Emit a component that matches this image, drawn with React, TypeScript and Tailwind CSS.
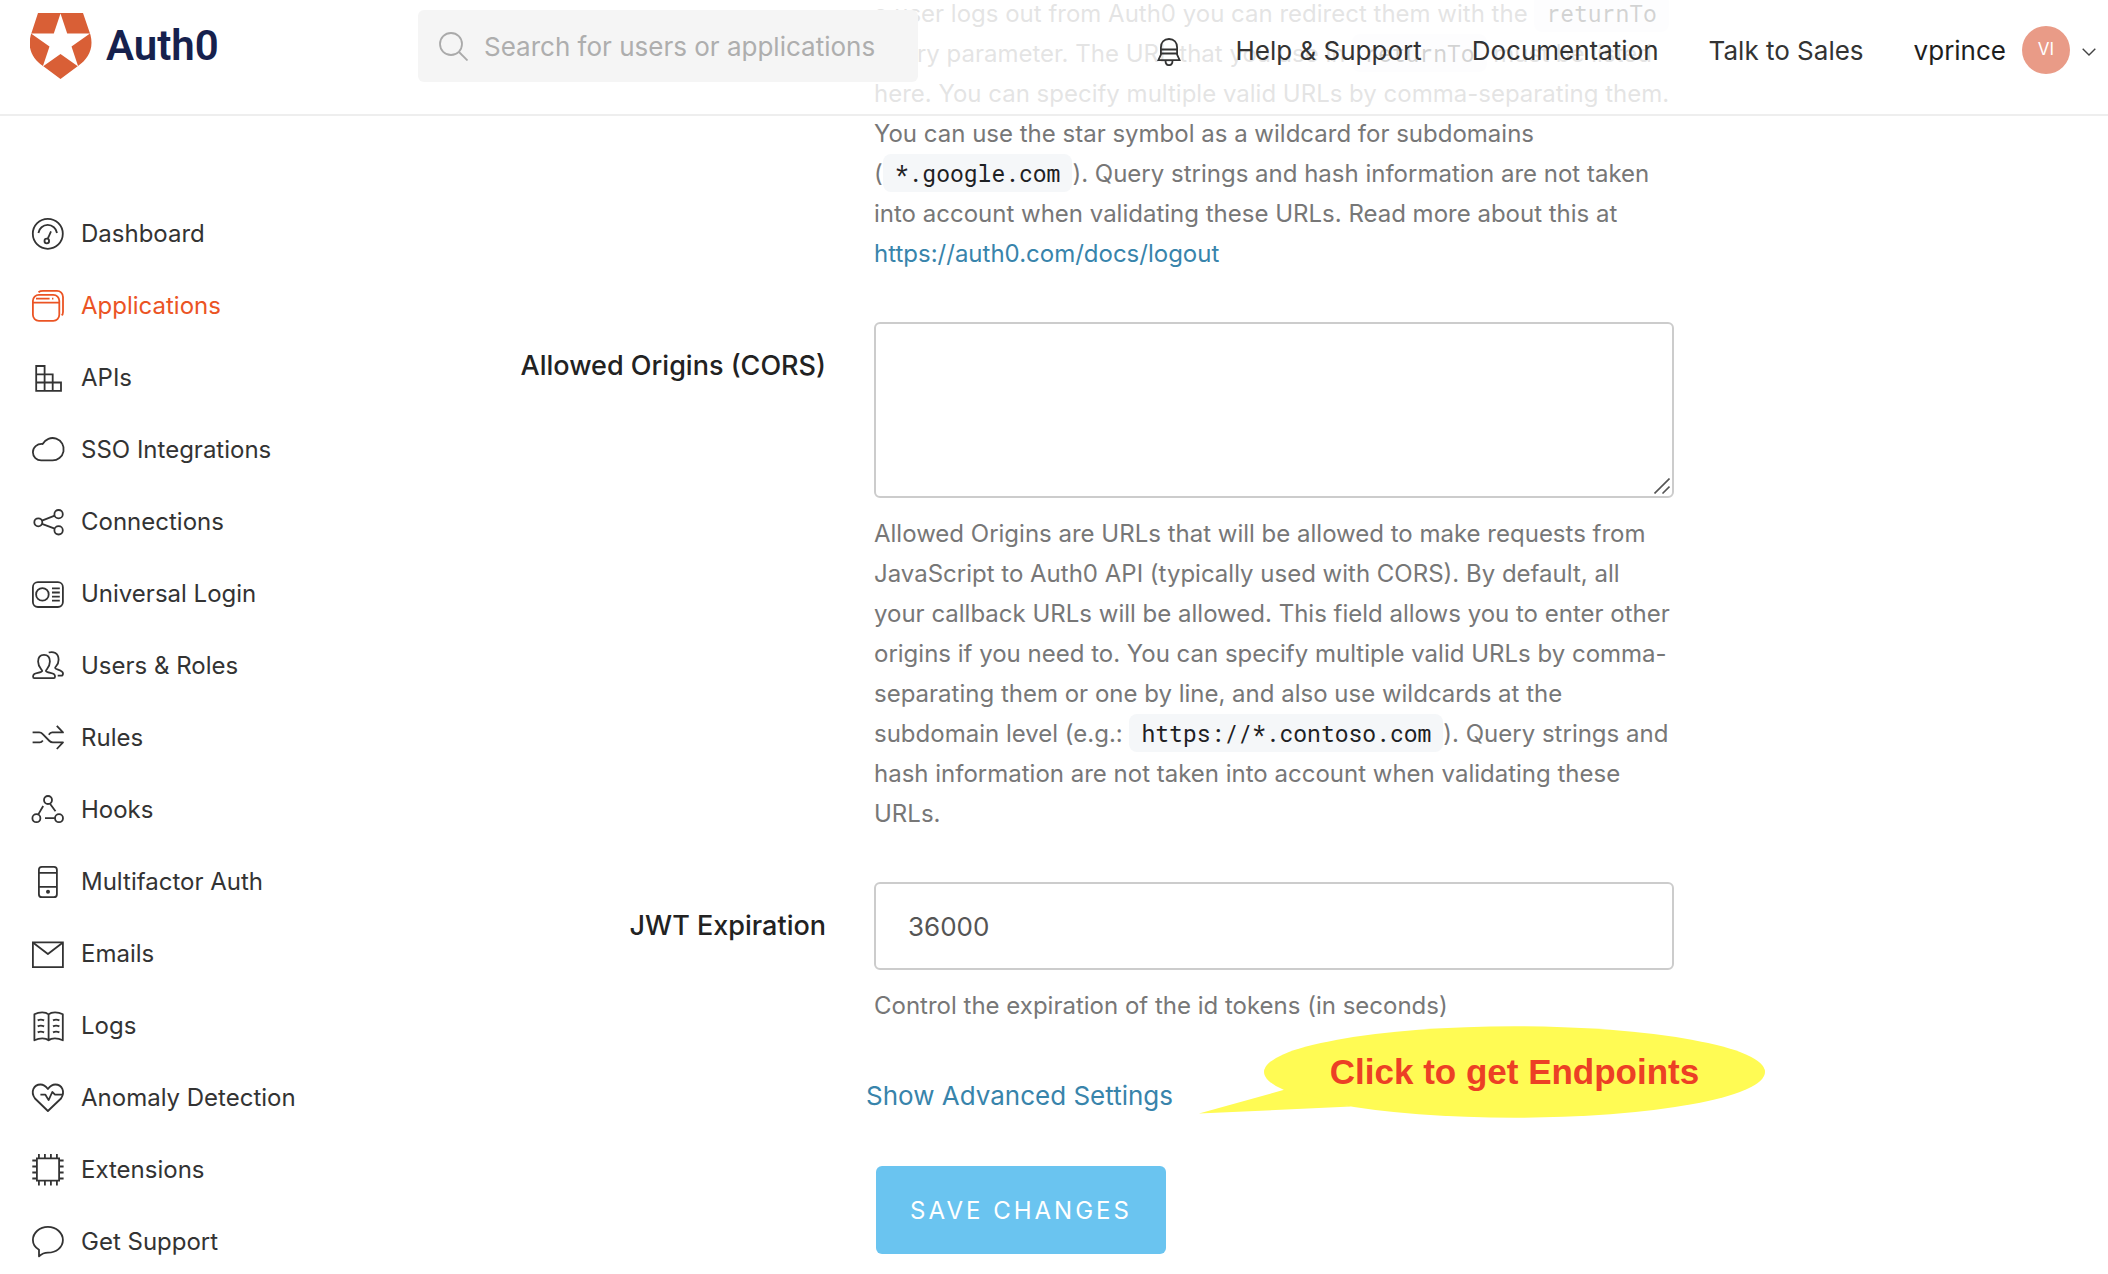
import React from 'react';

const icons: Record<string, React.ReactNode> = {
  Dashboard: (
    <>
      <circle cx="15.8" cy="15.8" r="15" />
      <path d="M6.4 15a9.4 9.4 0 0 1 18.6 0" />
      <circle cx="14.8" cy="23" r="2.3" />
      <path d="M15.8 20.6 19 13.4" />
    </>
  ),
  Applications: (
    <>
      <rect x="0.9" y="4.8" width="26.4" height="26" rx="6" />
      <path d="M1 12.7h26.3M4 8.7h13.6M20 8.7h1.4" />
      <path d="M6.5 2.2C8 1 9.5.9 11 .9h14a6 6 0 0 1 6 6v15c0 1.6-.4 2.8-1.4 3.4" />
    </>
  ),
  APIs: (
    <path strokeLinejoin="miter" d="M4.2 4h8.4v24.8H4.2zM4.2 12.3h16.5v16.5M4.2 20.5h24.8v8.3H4.2" />
  ),
  'SSO Integrations': (
    <path d="M9.2 26.4H20A11.2 11.2 0 1 0 10.6 10C5 9.6.9 13.4.9 18.2c0 4.7 3.8 8.2 8.3 8.2Z" />
  ),
  Connections: (
    <>
      <circle cx="6.3" cy="16.3" r="4" />
      <circle cx="26.6" cy="8.2" r="4.2" />
      <circle cx="26.6" cy="24.3" r="4.2" />
      <path d="M10 14.7 22.7 9.7M10 17.9l12.7 4.8" />
    </>
  ),
  'Universal Login': (
    <>
      <rect x="0.9" y="4.2" width="30" height="24.8" rx="5" />
      <circle cx="10.4" cy="16.4" r="6.3" />
      <path d="M20 10.4h7.8M20 14.5h7.8M20 18.6h7.8M20 22.7h7.8" />
    </>
  ),
  'Users & Roles': (
    <>
      <path d="M2.3 28.2c-1.6 0-1.7-3 0-4.2 1.6-1.1 7.8-1.500 7.900-3.100 0-1.400-4.100-3.400-4.100-9.400 0-4.200 2-6.700 5.900-6.700s5.900 2.500 5.900 6.700c0 6-4 8-4 9.400.1 1.600 6.200 2 7.900 3.100 1.700 1.200 1.600 4.200 0 4.200Z" />
      <path d="M16.700 2.500c4.500-1.400 9.900.5 9.900 7.200 0 5.600-3.500 6.600-3.500 8.200 0 1.800 7.900 2 7.900 5.600 0 2-.8 2.200-1.700 2.200h-3.600" />
    </>
  ),
  Rules: (
    <>
      <path d="M.6 10.4h6.600c1.500 0 2.300.3 3.300 1.400l7 7.200c1 1 1.800 1.400 3.300 1.400H31L24.800 27" />
      <path d="M.6 20.400h7.200c1.500 0 2-.4 3-1.900M16.800 12.700c1-1.600 1.700-2.300 3.400-2.300H31l-6.200-6.600" />
    </>
  ),
  Hooks: (
    <>
      <circle cx="16" cy="6" r="4" />
      <circle cx="4.4" cy="24.2" r="4" />
      <circle cx="27" cy="24.2" r="4" />
      <path d="M6.3 20.4 11.2 12M18 9.7l5.500 7.500M13 24.200h9.800" />
    </>
  ),
  'Multifactor Auth': (
    <>
      <rect x="6.9" y="0.8" width="18" height="30.4" rx="3" />
      <path d="M7 6.800h18M7 20.800h18" />
      <circle cx="16" cy="25.8" r="1.1" fill="currentColor" />
    </>
  ),
  Emails: (
    <>
      <path strokeLinejoin="miter" d="M.9 4.400h30v24.800H.9z" />
      <path d="M1.200 4.800 15.900 16 30.600 4.800" />
    </>
  ),
  Logs: (
    <>
      <path d="M16.600 30.300c-3-2.600-9-2.600-14.200 0V4.300c4.800-2.700 11.200-2.700 14.200 0Zm0 0c3-2.600 9-2.600 14.200 0V4.300c-4.800-2.700-11.200-2.700-14.200 0Z" />
      <path d="M5.700 10.400q3-1.600 6.400 0M5.700 16.400q3-1.600 6.400 0M5.700 22.400q3-1.600 6.400 0M21 10.400q3-1.600 6.400 0M21 16.400q3-1.600 6.400 0M21 22.400q3-1.600 6.400 0" />
    </>
  ),
  'Anomaly Detection': (
    <>
      <path d="M15.900 29 3 16.500C-2 9.500 2 2.500 8.500 2.500c3.300 0 5.500 2 7.400 4.500 1.900-2.500 4.100-4.500 7.400-4.500C30 2.500 33.500 9.500 29 16.500Z" />
      <path d="M8.400 12.700h5l3.200 5.400L20.300 10l2.700 2.700h8" />
    </>
  ),
  Extensions: (
    <path
      strokeLinejoin="miter"
      d="M4.900 4.300h22.200v22.400H4.900zM6.900 4.300V0M12.900 4.300V0M18.900 4.300V0M24.900 4.300V0M6.900 31.400v-4.700M12.900 31.400v-4.700M18.900 31.400v-4.700M24.900 31.400v-4.700M4.900 6.500H.3M4.900 12.500H.3M4.900 18.500H.3M4.900 24.500H.3M31.600 6.500h-4.500M31.600 12.500h-4.500M31.600 18.500h-4.500M31.600 24.500h-4.500"
    />
  ),
  'Get Support': (
    <path d="M7 30.300v-6.500C3 21.500.9 18 .9 14.100.9 6.800 7.600.9 15.900.9s15 5.900 15 13.200-6.700 12.600-15 12.600c-3.500 0-5.900.9-8.900 3.600Z" />
  ),
};

function Code({ children }: { children: React.ReactNode }) {
  return (
    <code className="rounded-lg bg-[#f5f7f9] px-3 py-1 font-['Roboto_Mono','Liberation_Mono',monospace] text-[23px] leading-7 text-[#1e2124]">
      {children}
    </code>
  );
}

function Logo() {
  return (
    <a href="#home" className="flex items-center gap-3.5">
      <svg viewBox="0 0 62 66" className="h-[66px] w-[62px]" aria-hidden="true">
        <path fill="#d95f36" d="M8 0h45l7.500 22C64 36 58 46 48 53L30.500 66 13 53C3 46-3 36 .8 22Z" />
        <path fill="#fff" d="m30.500.5 6.700 20H60L41.500 33.500l6.700 20L30.500 41 12.800 53.500l6.700-20L1 20.500h22.800Z" />
      </svg>
      <span className="font-[Roboto,sans-serif] text-[42px] leading-none font-semibold text-[#16214d]">Auth0</span>
    </a>
  );
}

function Header() {
  return (
    <header className="absolute inset-x-0 top-0 z-10 border-b-2 border-[#eeeeee] bg-white/80 pb-[22px]">
      <div className="flex h-[92px] items-center">
        <div className="w-[418px] shrink-0 pl-[30px]">
          <Logo />
        </div>
        <label className="flex h-[72px] w-[500px] items-center gap-4 rounded-md bg-[#f5f5f5] pl-5">
          <svg viewBox="0 0 30 30" className="size-[30px] shrink-0" fill="none" stroke="#aaaaaa" strokeWidth="1.8" aria-hidden="true">
            <circle cx="13" cy="13" r="11" />
            <path d="m21 21 8.500 8.500" />
          </svg>
          <input
            type="search"
            aria-label="Search for users or applications"
            placeholder="Search for users or applications"
            className="min-w-0 flex-1 bg-transparent text-[26px] outline-none placeholder:text-[#aeaeae]"
          />
        </label>
        <nav className="ml-auto flex items-center gap-[50px] pt-2 pr-3 text-[26px] text-[#333333]">
          <button type="button" aria-label="Notifications" className="pt-1 pr-1">
            <svg viewBox="0 0 24 28" className="h-7 w-6" fill="none" stroke="currentColor" strokeWidth="1.8" aria-hidden="true">
              <path d="M3.900 16.500V9.500C3.900 4.500 7 1 12 1s8.100 3.500 8.100 8.500v7l2.600 5.700H1.300ZM4 11.500h16M4 15.500h16" />
              <path d="M8.500 22.500c0 3 1.300 4.700 3.500 4.700s3.500-1.700 3.500-4.700" />
            </svg>
          </button>
          <a href="#help">Help &amp; Support</a>
          <a href="#docs">Documentation</a>
          <a href="#sales">Talk to Sales</a>
          <button type="button" className="flex items-center text-[#1e1e1e]">
            vprince
            <span className="ml-4 flex size-12 items-center justify-center rounded-full bg-[#e99b87] text-[17px] text-white">VI</span>
            <svg viewBox="0 0 14 8" className="mt-1 ml-3 h-2 w-3.5" fill="none" stroke="#444444" strokeWidth="1.4" aria-hidden="true">
              <path d="m.7.700 6.300 6.300L13.300.700" />
            </svg>
          </button>
        </nav>
      </div>
    </header>
  );
}

function Sidebar() {
  return (
    <aside className="w-[418px] shrink-0 pt-[198px]">
      <nav>
        <ul>
          {Object.keys(icons).map((name) => (
            <li key={name}>
              <a
                href="#section"
                className={
                  name === 'Applications'
                    ? 'flex h-[72px] items-center gap-[17px] pl-8 text-2xl text-[#eb5424]'
                    : 'flex h-[72px] items-center gap-[17px] pl-8 text-2xl text-[#333333]'
                }
              >
                <svg
                  viewBox="0 0 32 32"
                  className="size-8 overflow-visible"
                  fill="none"
                  stroke="currentColor"
                  strokeWidth="1.8"
                  strokeLinejoin="round"
                  aria-hidden="true"
                >
                  {icons[name]}
                </svg>
                {name}
              </a>
            </li>
          ))}
        </ul>
      </nav>
    </aside>
  );
}

function Callout() {
  return (
    <div className="absolute -top-12 left-[325px] h-[92px] w-[566px] pl-[65px]">
      <svg viewBox="0 0 566 92" className="absolute inset-0 size-full" fill="#fffb54" aria-hidden="true">
        <ellipse cx="315.5" cy="46" rx="250.5" ry="45.7" />
        <path d="M0 87.500 86 63.500l66 17Z" />
      </svg>
      <p className="relative flex h-full items-center justify-center font-['Liberation_Sans',Arial,sans-serif] text-[35px] font-bold text-[#ec4025]">
        Click to get Endpoints
      </p>
    </div>
  );
}

export default function App() {
  return (
    <div className="relative flex h-screen overflow-hidden bg-white font-[Inter,sans-serif]">
      <Header />
      <Sidebar />
      <main className="min-w-0 flex-1">
        <form className="-mt-1.5 grid grid-cols-[408px_minmax(0,800px)] gap-x-12 text-2xl leading-10 text-[#777777]">
          <p className="col-start-2">
            a user logs out from Auth0 you can redirect them with the <Code>returnTo</Code>
            <br />
            query parameter. The URL that you use in <Code>returnTo</Code> must be listed
            <br />
            here. You can specify multiple valid URLs by comma-separating them.
            <br />
            You can use the star symbol as a wildcard for subdomains
            <br />(<Code>*.google.com</Code>). Query strings and hash information are not taken
            <br />
            into account when validating these URLs. Read more about this at
            <br />
            <a href="https://auth0.com/docs/logout" className="text-[#3884ab]">
              https://auth0.com/docs/logout
            </a>
          </p>

          <label htmlFor="origins" className="mt-12 pt-6 text-right text-[27px] font-medium text-[#222222]">
            Allowed Origins (CORS)
          </label>
          <div className="mt-12">
            <div className="relative">
              <textarea
                id="origins"
                className="block h-44 w-full resize-y rounded-md border-2 border-[#cccccc] bg-white px-8 py-5 outline-none [&::-webkit-resizer]:hidden"
              />
              <svg
                viewBox="0 0 16 16"
                className="pointer-events-none absolute right-1 bottom-1 size-4"
                fill="none"
                stroke="#555555"
                strokeWidth="1.6"
                aria-hidden="true"
              >
                <path d="M.5 15.500 15.500.5M8.500 15.500l7-7" />
              </svg>
            </div>
            <p className="mt-4">
              Allowed Origins are URLs that will be allowed to make requests from
              <br />
              JavaScript to Auth0 API (typically used with CORS). By default, all
              <br />
              your callback URLs will be allowed. This field allows you to enter other
              <br />
              origins if you need to. You can specify multiple valid URLs by comma-
              <br />
              separating them or one by line, and also use wildcards at the
              <br />
              subdomain level (e.g.: <Code>https://*.contoso.com</Code>). Query strings and
              <br />
              hash information are not taken into account when validating these
              <br />
              URLs.
            </p>
          </div>

          <label htmlFor="jwt" className="mt-12 pt-6 text-right text-[27px] font-medium text-[#222222]">
            JWT Expiration
          </label>
          <div className="mt-12">
            <input
              id="jwt"
              type="text"
              defaultValue="36000"
              className="block h-[88px] w-full rounded-md border-2 border-[#cccccc] bg-white px-8 text-[26px] text-[#555555] outline-none"
            />
            <p className="mt-4">Control the expiration of the id tokens (in seconds)</p>
          </div>

          <div className="relative col-start-2 my-12">
            <a href="#advanced" className="-ml-2 block text-[26px] leading-[44px] text-[#3884ab]">
              Show Advanced Settings
            </a>
            <Callout />
          </div>

          <div className="col-start-2 pl-0.5">
            <button
              type="submit"
              className="h-[88px] w-[290px] rounded-md bg-[#6ac4f0] pt-0.5 text-2xl tracking-[3px] text-white"
            >
              SAVE CHANGES
            </button>
          </div>
        </form>
      </main>
    </div>
  );
}
